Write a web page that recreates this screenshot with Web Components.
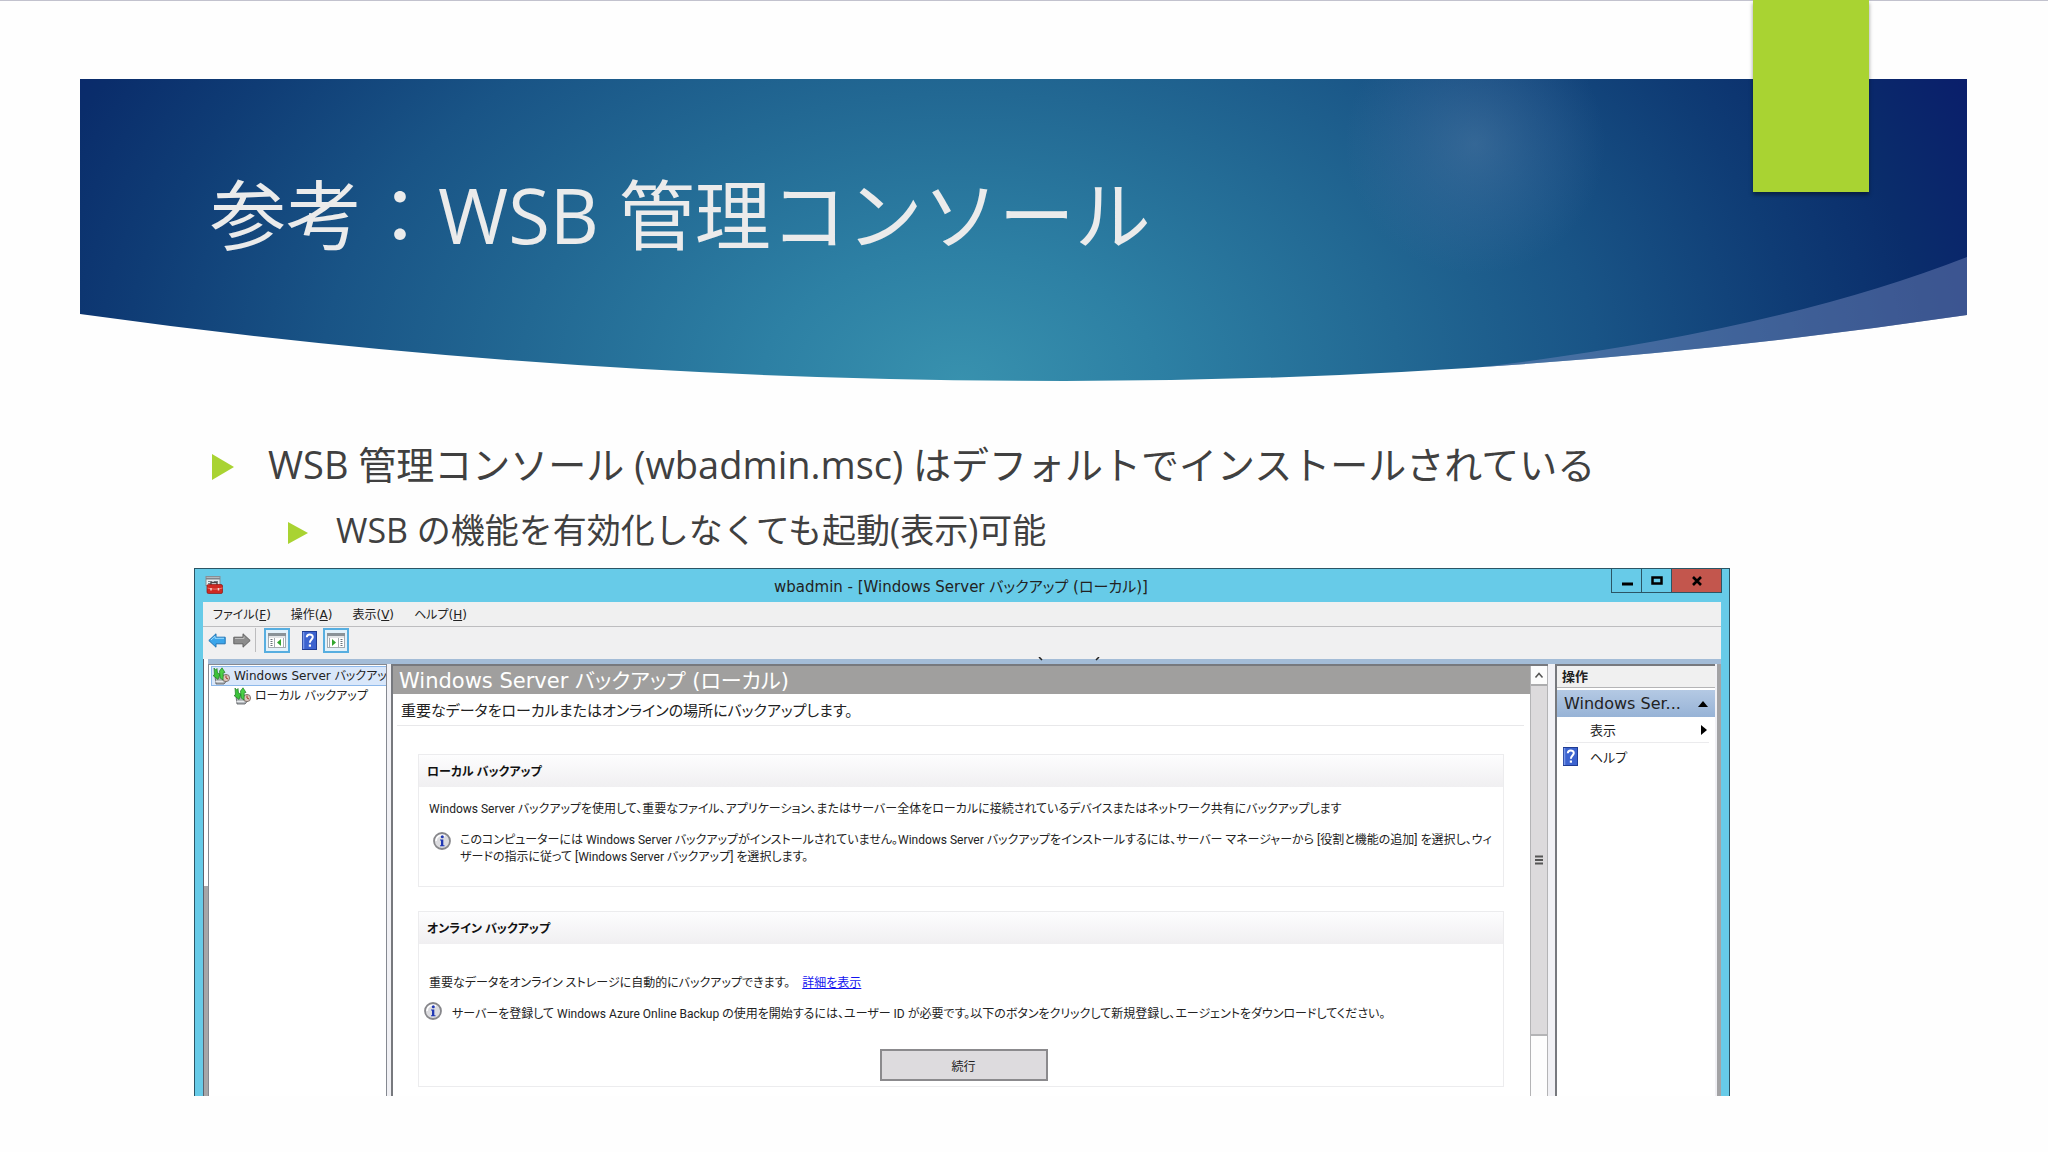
<!DOCTYPE html>
<html lang="ja">
<head>
<meta charset="utf-8">
<title>参考：WSB 管理コンソール</title>
<style>
    body {
        margin: 0;
        background: #fefefe;
        font-family: "DejaVu Sans", "Noto Sans CJK JP", sans-serif;
    }
</style>
</head>
<body>
<slide-page>
    <slide-banner slot="banner">参考：WSB 管理コンソール</slide-banner>
    <bullet-item>WSB 管理コンソール (wbadmin.msc) はデフォルトでインストールされている</bullet-item>
    <bullet-item level="2">WSB の機能を有効化しなくても起動(表示)可能</bullet-item>
    <mmc-window slot="figure" heading="wbadmin - [Windows Server バックアップ (ローカル)]">
        <mmc-menubar slot="menu"></mmc-menubar>
        <mmc-toolbar slot="menu"></mmc-toolbar>
        <mmc-tree slot="tree"></mmc-tree>
        <mmc-page heading="Windows Server バックアップ (ローカル)" summary="重要なデータをローカルまたはオンラインの場所にバックアップします。">
            <group-box heading="ローカル バックアップ">
                <text-line>Windows Server バックアップを使用して、重要なファイル、アプリケーション、またはサーバー全体をローカルに接続されているデバイスまたはネットワーク共有にバックアップします</text-line>
                <info-note>このコンピューターには Windows Server バックアップがインストールされていません。Windows Server バックアップをインストールするには、サーバー マネージャーから [役割と機能の追加] を選択し、ウィ<br>ザードの指示に従って [Windows Server バックアップ] を選択します。</info-note>
            </group-box>
            <group-box heading="オンライン バックアップ" kind="online">
                <text-line>重要なデータをオンライン ストレージに自動的にバックアップできます。<a slot="link" href="#details">詳細を表示</a></text-line>
                <info-note flush>サーバーを登録して Windows Azure Online Backup の使用を開始するには、ユーザー ID が必要です。以下のボタンをクリックして新規登録し、エージェントをダウンロードしてください。</info-note>
                <push-button slot="action">続行</push-button>
            </group-box>
        </mmc-page>
        <mmc-actions slot="actions"></mmc-actions>
    </mmc-window>
</slide-page>

<script>
const icons = {
    toolbox: `<svg viewBox="0 0 18 18" width="18" height="18">
        <rect x="1" y="0.5" width="14" height="9" fill="#e8eef0" stroke="#8a8f94"/>
        <path d="M1 2.5h14" stroke="#7d858c" stroke-width="2"/>
        <path d="M3 5.5h4M3 7.5h3M9 5.5h4" stroke="#7b858d"/>
        <path d="M6 9V6.5h6V9" fill="none" stroke="#4a4a4a" stroke-width="1.4"/>
        <rect x="2" y="8.5" width="15.5" height="9" rx="1.5" fill="#cf2a22" stroke="#8c1712" stroke-width=".7"/>
        <path d="M2.5 12c4 1.5 11 1.5 15 0" fill="none" stroke="#ef766c"/>
        <path d="M6 12v2.5M13.5 12v2.5" stroke="#f5d4cf" stroke-width="1.5"/>
    </svg>`,
    back: `<svg viewBox="0 0 18 15" width="18" height="15">
        <path d="M.8 7.5 8 .8v3.400h9.200v6.600H8v3.400z" fill="#3ba5ea" stroke="#2174b5"/>
        <path d="M3 7 7 3.300v2h9" fill="none" stroke="#9bdcff"/>
    </svg>`,
    forward: `<svg viewBox="0 0 18 15" width="18" height="15">
        <path d="M17.2 7.5 10 .8v3.400H.8v6.600H10v3.400z" fill="#8c8c8c" stroke="#626262"/>
        <path d="M2 5.5h9v-2" fill="none" stroke="#bdbdbd"/>
    </svg>`,
    help: `<svg viewBox="0 0 15 19" width="15" height="19">
        <rect x=".5" y=".5" width="14" height="18" fill="#3c63cf" stroke="#1f3c94"/>
        <path d="M1.5 1v17" stroke="#7a99ea" stroke-width="1.5"/>
        <path d="M4.8 6.300c0-3.800 6-3.600 6-.3 0 2.500-2.900 2.500-2.900 5.700" fill="none" stroke="#fff" stroke-width="2"/>
        <rect x="6.8" y="13.5" width="2.2" height="2.2" fill="#fff"/>
    </svg>`,
    paneLeft: `<svg viewBox="0 0 18 15" width="18" height="15">
        <rect x=".5" y=".5" width="17" height="14" fill="#fff" stroke="#a4abb1"/>
        <path d="M0 1.5h18" stroke="#8a9298" stroke-width="3"/>
        <path d="M1 4h16" stroke="#c9cdd2"/>
        <path d="M2.5 6.5h2M2.5 8.5h2M2.5 10.5h2M2.5 12.5h2" stroke="#6a727a"/>
        <path d="M6.5 5v9M15.5 5v9" stroke="#a4abb1"/>
        <path d="M13 6v7L9 9.500z" fill="#32a62e"/>
    </svg>`,
    paneRight: `<svg viewBox="0 0 18 15" width="18" height="15">
        <rect x=".5" y=".5" width="17" height="14" fill="#fff" stroke="#a4abb1"/>
        <path d="M0 1.5h18" stroke="#8a9298" stroke-width="3"/>
        <path d="M1 4h16" stroke="#c9cdd2"/>
        <path d="M13.5 6.5h2M13.5 8.5h2M13.5 10.5h2M13.5 12.5h2" stroke="#6a727a"/>
        <path d="M11.5 5v9M2.5 5v9" stroke="#a4abb1"/>
        <path d="M5 6v7l4-3.500z" fill="#32a62e"/>
    </svg>`,
    backup: `<svg viewBox="0 0 18 18" width="18" height="18">
        <path d="M3 9.5 9 7l8 4-5 6H4z" fill="#a9aeb2" stroke="#55595d" stroke-width=".8"/>
        <path d="M3.5 14.5h8" stroke="#e8eaec" stroke-width="1.5"/>
        <circle cx="14" cy="11" r="3.6" fill="#d9c6bd" stroke="#6d5f58" stroke-width=".8"/>
        <path d="M14 11V8.5M14 11l2 1" stroke="#a3322c"/>
        <path d="M2 1 3.500 3 5 1.500 5.500 6 8 7 6 12.500 1 8.500l1.500-.5z" fill="#3cc23a" stroke="#1d7c22" stroke-width=".7"/>
        <path d="M7.500 4 10 .8 13 5.500l-1.800.3-.2 7.200-2.800-2z" fill="#4bd047" stroke="#1d7c22" stroke-width=".7"/>
    </svg>`,
    info: `<svg viewBox="0 0 18 18" width="18" height="18">
        <circle cx="9" cy="9" r="8" fill="#dcdce0" stroke="#87878b" stroke-width="1.8"/>
        <path d="M3 9a6 6 0 0 1 9-5" fill="none" stroke="#fff" stroke-width="1.5"/>
        <circle cx="9.3" cy="4.8" r="1.5" fill="#2138b4"/>
        <path d="M7 7.5h3.300v5.700h1.200v1.100H7v-1.100h1V8.600H7z" fill="#2138b4"/>
    </svg>`
};

// attaches an open shadow root and fills it
function define(name, render) {
    customElements.define(name, class extends HTMLElement {
        connectedCallback() {
            if (this.shadowRoot) return;
            this.attachShadow({ mode: 'open' });
            this.shadowRoot.innerHTML = render(this);
        }
    });
}

define('slide-page', () => `
    <style>
        :host {
            display: block;
            position: relative;
            padding: 78px 81px 54px 80px;
            border-top: 1px solid #c2c2ce;
        }
        .tab {
            position: absolute;
            top: -1px;
            right: 179px;
            width: 116px;
            height: 192px;
            background: #a9d332;
            box-shadow: 0 3px 4px rgba(0, 0, 0, 0.4);
        }
        .list {
            padding: 55px 0 0 132px;
        }
        .figure {
            width: 75vw;
            margin: 16px 0 0 114px;
        }
    </style>
    <slot name="banner"></slot>
    <div class="tab"></div>
    <div class="list" role="list"><slot></slot></div>
    <div class="figure"><slot name="figure"></slot></div>
`);

define('slide-banner', () => `
    <style>
        :host {
            display: grid;
            color: #ebebeb;
            font-family: "Open Sans", "Noto Sans CJK JP", sans-serif;
        }
        svg, h1 {
            grid-area: 1 / 1;
        }
        svg {
            width: 100%;
            height: 302px;
        }
        h1 {
            z-index: 1;
            margin: 0;
            padding: 88px 0 0 130px;
            font-size: 76px;
            font-weight: 400;
            line-height: 96px;
        }
    </style>
    <svg viewBox="0 0 1887 302" preserveAspectRatio="none" aria-hidden="true">
        <defs>
            <radialGradient id="sea" gradientUnits="userSpaceOnUse" cx="0" cy="0" r="1" gradientTransform="translate(880 302) scale(1100 720)">
                <stop offset="0" stop-color="#3891ae"/>
                <stop offset=".18" stop-color="#2d80a4"/>
                <stop offset=".4" stop-color="#226893"/>
                <stop offset=".58" stop-color="#195486"/>
                <stop offset=".76" stop-color="#0f3c75"/>
                <stop offset=".88" stop-color="#0a2d6b"/>
                <stop offset="1" stop-color="#0a1f6b"/>
            </radialGradient>
            <radialGradient id="glow">
                <stop offset="0" stop-color="#5d82ac" stop-opacity=".4"/>
                <stop offset=".6" stop-color="#4f77a8" stop-opacity=".18"/>
                <stop offset="1" stop-color="#4f77a8" stop-opacity="0"/>
            </radialGradient>
            <clipPath id="shape"><path d="M0 0H1887V236Q1440 302 985 302Q480 302 0 235Z"/></clipPath>
        </defs>
        <g clip-path="url(#shape)">
            <rect width="1887" height="302" fill="url(#sea)"/>
            <circle cx="1395" cy="65" r="130" fill="url(#glow)"/>
            <path d="M1887 178Q1690 255 1385 290L1887 302Z" fill="#7b8cc0" opacity=".45"/>
        </g>
    </svg>
    <h1><slot></slot></h1>
`);

define('bullet-item', (el) => {
    el.setAttribute('role', 'listitem');
    return `
    <style>
        :host {
            display: flex;
            align-items: center;
            gap: 34px;
            color: #404040;
            font-family: "Open Sans", "Noto Sans CJK JP", sans-serif;
            font-size: 38px;
            line-height: 56px;
            white-space: nowrap;
        }
        :host([level="2"]) {
            gap: 28px;
            margin-top: 16px;
            padding-left: 76px;
            font-size: 34px;
            line-height: 44px;
        }
        svg {
            width: 22px;
            height: 26px;
            margin-top: 6px;
        }
        :host([level="2"]) svg {
            width: 20px;
            height: 22px;
        }
    </style>
    <svg viewBox="0 0 22 26" preserveAspectRatio="none"><path d="M0 0 22 13 0 26z" fill="#a9d332"/></svg>
    <span><slot></slot></span>
`;
});

define('mmc-window', (el) => `
    <style>
        :host {
            display: block;
            box-sizing: border-box;
            border: solid #2b5565;
            border-width: 1px 1px 0 1px;
            background: #67cbe8;
            color: #222;
            font-size: 12px;
            font-feature-settings: "palt", "kern";
        }
        header {
            display: flex;
            align-items: flex-start;
            height: 33px;
            padding: 0 7px 0 10px;
        }
        header svg {
            margin-top: 7px;
        }
        h2 {
            flex: 1;
            margin: 0;
            padding-left: 88px;
            font-size: 15px;
            font-weight: 400;
            line-height: 36px;
            text-align: center;
        }
        .buttons {
            display: flex;
            border: solid #2b5565;
            border-width: 0 1px 1px;
        }
        .buttons button {
            display: grid;
            place-items: center;
            width: 30px;
            height: 23px;
            padding: 0;
            border: 0;
            border-right: 1px solid #2b5565;
            background: none;
        }
        .buttons svg {
            margin: 0;
        }
        .buttons .close {
            width: 49px;
            border-right: 0;
            background: #c3564d;
        }
        .body {
            margin: 0 8px;
        }
        .panes {
            display: flex;
            border-top: 5px solid #a3bcd7;
            background: #f1f1f5;
        }
        .stub {
            width: 4px;
            margin-top: -5px;
            border-left: 1px solid #5b6270;
            background: linear-gradient(#fff 227px, #a6a6a8 227px);
        }
        .strip {
            width: 4px;
            margin-left: 2px;
            background: #a3a3a5;
        }
        ::slotted(mmc-page) {
            flex: 1;
            margin: 0 7px 0 4px;
        }
    </style>
    <header>
        ${icons.toolbox}
        <h2>${el.getAttribute('heading')}</h2>
        <div class="buttons">
            <button aria-label="最小化"><svg width="12" height="12"><path d="M1 9h11" stroke="#000" stroke-width="3"/></svg></button>
            <button aria-label="最大化"><svg width="12" height="10"><rect x="1.5" y="1.5" width="9" height="6" fill="none" stroke="#000" stroke-width="2.5"/></svg></button>
            <button class="close" aria-label="閉じる"><svg width="12" height="10"><path d="M2 1 10 9M10 1 2 9" stroke="#000" stroke-width="2.6"/></svg></button>
        </div>
    </header>
    <div class="body">
        <slot name="menu"></slot>
        <div class="panes">
            <div class="stub"></div>
            <slot name="tree"></slot>
            <slot></slot>
            <slot name="actions"></slot>
            <div class="strip"></div>
        </div>
    </div>
`);

define('mmc-menubar', () => `
    <style>
        :host {
            display: flex;
            gap: 20px;
            padding-left: 10px;
            border-bottom: 1px solid #bdbdbf;
            background: #f0f0f0;
        }
        button {
            height: 24px;
            padding: 0 0 2px;
            border: 0;
            background: none;
            color: inherit;
            font: inherit;
            font-feature-settings: inherit;
        }
    </style>
    <button>ファイル(<u>F</u>)</button>
    <button>操作(<u>A</u>)</button>
    <button>表示(<u>V</u>)</button>
    <button>ヘルプ(<u>H</u>)</button>
`);

define('mmc-toolbar', () => `
    <style>
        :host {
            display: flex;
            position: relative;
            align-items: center;
            height: 32px;
            padding-left: 5px;
            background: #f0f0f1;
        }
        button {
            display: grid;
            place-items: center;
            height: 25px;
            margin-bottom: 6px;
            padding: 0;
            border: 0;
            background: none;
        }
        .next {
            margin-left: 7px;
        }
        .sep {
            width: 1px;
            height: 24px;
            margin: 0 8px 6px 4px;
            background: #bcbcbe;
        }
        .on {
            box-sizing: border-box;
            width: 26px;
            border: 2px solid #57aee0;
            background: #e3f1fa;
        }
        .help {
            margin: 0 6px 6px 12px;
        }
        .marks {
            position: absolute;
            left: 835px;
            bottom: -2px;
        }
    </style>
    <button aria-label="戻る">${icons.back}</button>
    <button class="next" aria-label="進む">${icons.forward}</button>
    <span class="sep"></span>
    <button class="on" aria-label="コンソール ツリー">${icons.paneLeft}</button>
    <button class="help" aria-label="ヘルプ">${icons.help}</button>
    <button class="on" aria-label="操作ウィンドウ">${icons.paneRight}</button>
    <svg class="marks" width="62" height="4"><path d="M1 0 4 3M61 0 58 3" stroke="#222" stroke-width="1.5"/></svg>
`);

define('mmc-tree', () => `
    <style>
        :host {
            display: block;
            box-sizing: border-box;
            width: 179px;
            padding: 1px 0 0 2px;
            border: solid #858991;
            border-width: 1px 1px 0;
            background: #fff;
            overflow: hidden;
        }
        .item {
            display: flex;
            align-items: center;
            gap: 4px;
            box-sizing: border-box;
            height: 20px;
            line-height: 18px;
            white-space: nowrap;
        }
        .item.selected {
            border: 1px solid #8db8ea;
            border-right: 0;
            background: #d9e7fa;
        }
        .item.child {
            padding-left: 22px;
        }
        svg {
            flex: none;
        }
    </style>
    <div role="tree" aria-label="コンソール ツリー">
        <div class="item selected" role="treeitem" aria-selected="true">${icons.backup}<span>Windows Server バックアッ</span></div>
        <div class="item child" role="treeitem" aria-selected="false">${icons.backup}<span>ローカル バックアップ</span></div>
    </div>
`);

define('mmc-page', (el) => `
    <style>
        :host {
            display: flex;
            min-width: 0;
            border-left: 2px solid #77797e;
            border-top: 2px solid #77797e;
            background: #fff;
        }
        main {
            flex: 1;
            min-width: 0;
            padding-bottom: 9px;
        }
        h3 {
            margin: 0;
            padding: 2px 0 0 6px;
            background: #a09f9e;
            color: #fff;
            font-size: 21px;
            font-weight: 400;
            line-height: 26px;
        }
        .summary {
            margin: 0 6px 28px 4px;
            padding: 3px 0 0 4px;
            border-bottom: 1px solid #e8e8ea;
            font-size: 15px;
            line-height: 28px;
        }
        .groups {
            display: grid;
            grid-template-columns: minmax(0, 1fr);
            gap: 24px;
            margin: 0 26px 0 25px;
        }
        .scroll {
            display: flex;
            flex-direction: column;
            box-sizing: border-box;
            width: 18px;
            border: solid #b4b4b6;
            border-width: 0 1px;
            background: #fdfdfd;
        }
        .scroll button {
            height: 20px;
            padding: 0;
            border: 0;
            border-bottom: 2px solid #acacae;
            background: #fcfcfc;
        }
        .scroll button svg {
            display: block;
            margin: auto;
        }
        .thumb {
            display: grid;
            place-items: center;
            height: 348px;
            border-bottom: 2px solid #b4b4b6;
            background: #dcdadc;
        }
    </style>
    <main>
        <h3>${el.getAttribute('heading')}</h3>
        <div class="summary">${el.getAttribute('summary')}</div>
        <div class="groups"><slot></slot></div>
    </main>
    <div class="scroll">
        <button aria-label="上へスクロール"><svg width="10" height="8"><path d="M1.5 6.5 5 2.5 8.5 6.5" fill="none" stroke="#555" stroke-width="1.5"/></svg></button>
        <div class="thumb"><svg width="8" height="10"><path d="M0 1.5h8M0 5h8M0 8.5h8" stroke="#555" stroke-width="2"/></svg></div>
    </div>
`);

define('group-box', (el) => `
    <style>
        :host {
            display: block;
            border: 1px solid #ececee;
            font-family: Roboto, "Noto Sans CJK JP", sans-serif;
        }
        h4 {
            margin: 0;
            padding: 2px 0 0 8px;
            background: linear-gradient(#fdfdfe, #f0eff1);
            color: #111;
            font-size: 12px;
            line-height: 30px;
        }
        .content {
            display: grid;
            gap: 14px;
            padding: 13px 0 20px 10px;
        }
        :host([kind="online"]) .content {
            gap: 10px;
            padding: 30px 0 5px 5px;
        }
        :host([kind="online"]) ::slotted(text-line) {
            padding-left: 5px;
        }
        ::slotted([slot="action"]) {
            justify-self: center;
            margin-top: 16px;
        }
    </style>
    <section>
        <h4>${el.getAttribute('heading')}</h4>
        <div class="content"><slot></slot><slot name="action"></slot></div>
    </section>
`);

define('text-line', () => `
    <style>
        :host {
            display: flex;
            gap: 12px;
            line-height: 18px;
            white-space: nowrap;
        }
        ::slotted(a) {
            color: #1414f0;
        }
    </style>
    <span><slot></slot></span><slot name="link"></slot>
`);

define('info-note', () => `
    <style>
        :host {
            display: flex;
            gap: 9px;
            padding-left: 4px;
            line-height: 17px;
            white-space: nowrap;
        }
        :host([flush]) {
            gap: 10px;
            padding-left: 0;
        }
        svg {
            flex: none;
        }
        :host([flush]) span {
            padding-top: 4px;
        }
    </style>
    ${icons.info}<span><slot></slot></span>
`);

define('push-button', () => `
    <style>
        :host {
            display: block;
        }
        button {
            display: block;
            width: 168px;
            height: 32px;
            border: 2px solid #8b8a8d;
            background: #dddbde;
            color: inherit;
            font: inherit;
        }
    </style>
    <button><slot></slot></button>
`);

define('mmc-actions', () => `
    <style>
        :host {
            display: block;
            box-sizing: border-box;
            width: 160px;
            border: solid #77797e;
            border-width: 2px 0 0 2px;
            background: #fff;
        }
        h3 {
            margin: 0 0 2px;
            padding-left: 5px;
            border-bottom: 1px solid #b4b4b6;
            background: #f0f0f0;
            font-size: 13px;
            line-height: 21px;
        }
        .group {
            display: flex;
            align-items: center;
            justify-content: space-between;
            padding: 0 7px;
            background: linear-gradient(#b4c9e4, #97b3d6);
            font-size: 16px;
            line-height: 27px;
        }
        button {
            display: flex;
            align-items: center;
            width: 100%;
            height: 25px;
            padding: 0 8px 0 6px;
            border: 0;
            background: none;
            color: inherit;
            font: inherit;
            font-size: 13px;
            font-feature-settings: inherit;
        }
        .mark {
            display: flex;
            width: 27px;
        }
        .more {
            margin-left: auto;
        }
        hr {
            margin: 0 6px 1px 8px;
            border: 0;
            border-top: 1px solid #ebebed;
        }
    </style>
    <h3>操作</h3>
    <div class="group"><span>Windows Ser...</span><svg width="10" height="6"><path d="M0 6 5 0 10 6z"/></svg></div>
    <button><span class="mark"></span>表示<svg class="more" width="6" height="10"><path d="M0 0 6 5 0 10z"/></svg></button>
    <hr>
    <button><span class="mark">${icons.help}</span>ヘルプ</button>
`);
</script>
</body>
</html>
